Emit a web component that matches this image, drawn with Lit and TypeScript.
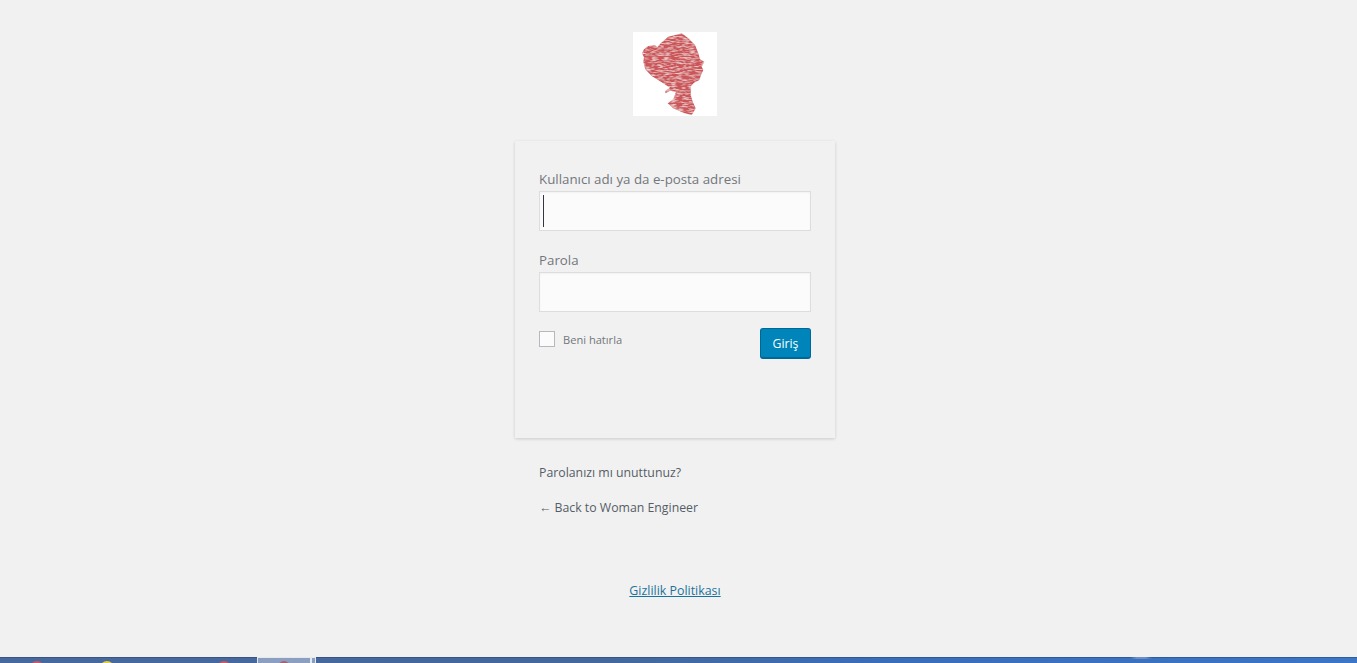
import { LitElement, css, html } from "lit";
import { customElement } from "lit/decorators.js";

const SILHOUETTE =
  "M48.7 1.3 L55.3 6.3 L62 13 L65.3 21.3 L67 27.3 L71.3 29.7 L68.7 34.7 L70.3 38 L68 43 L66.3 48 L61 50.7 L58 54 L57.7 63 L59.7 69.7 L62.7 76.3 L58.7 83 L50.3 80.7 L40.3 76.3 L34.7 71.3 L40.3 67.3 L43 59.7 L37 58.7 L32.7 61.3 L32 59.3 L37 55.7 L30.3 51.3 L18.7 44 L12.3 37.3 L10.3 29.7 L11 25.3 L9 21.3 L11 17.3 L15.3 14 L22 13.3 L24.3 15.3 L27.7 11.3 L35.3 4.7 L45.3 2.3 Z";

@customElement("site-logo")
export class SiteLogo extends LitElement {
  render() {
    return html`
      <svg viewBox="0 0 84 84" width="84" height="84" aria-label="Woman Engineer">
        <defs>
          <!-- stretched noise gives the "lines of text" look inside the head -->
          <filter id="paper" x="0" y="0" width="100%" height="100%">
            <feTurbulence type="fractalNoise" baseFrequency="0.16 0.7" numOctaves="2" seed="4" result="noise"></feTurbulence>
            <feColorMatrix
              in="noise"
              type="matrix"
              values="0 0 0 0 0.95  0 0 0 0 0.78  0 0 0 0 0.78  2 0 0 0 -0.85"
              result="light"
            ></feColorMatrix>
            <feComposite in="light" in2="SourceAlpha" operator="in" result="marks"></feComposite>
            <feMerge result="merged">
              <feMergeNode in="SourceGraphic"></feMergeNode>
              <feMergeNode in="marks"></feMergeNode>
            </feMerge>
            <feGaussianBlur in="merged" stdDeviation="0.5"></feGaussianBlur>
          </filter>
        </defs>
        <rect width="84" height="84" fill="#fff"></rect>
        <path d=${SILHOUETTE} fill="#cb5459" filter="url(#paper)"></path>
      </svg>
    `;
  }

  static styles = css`
    :host {
      display: block;
      width: 84px;
      height: 84px;
    }
    svg {
      display: block;
    }
  `;
}

@customElement("app-root")
export class AppRoot extends LitElement {
  render() {
    return html`
      <main class="login">
        <site-logo></site-logo>
        <form class="card" @submit=${(e: Event) => e.preventDefault()}>
          <label class="field-label" for="user">Kullanıcı adı ya da e-posta adresi</label>
          <div class="field">
            <input id="user" type="text" />
            <span class="caret"></span>
          </div>
          <label class="field-label second" for="pass">Parola</label>
          <div class="field"><input id="pass" type="password" /></div>
          <div class="actions">
            <label class="remember"><input class="check" type="checkbox" />Beni hatırla</label>
            <button class="submit">Giriş</button>
          </div>
        </form>
        <nav class="links">
          <a>Parolanızı mı unuttunuz?</a>
          <a>← Back to Woman Engineer</a>
        </nav>
        <a class="privacy">Gizlilik Politikası</a>
      </main>
      <footer class="taskbar">
        <span class="peek red first"></span>
        <span class="peek yellow"></span>
        <span class="peek red third"></span>
        <span class="active"><span class="active-icon"></span></span>
        <span class="active-edge"></span>
        <span class="smudge"></span>
      </footer>
    `;
  }

  static styles = css`
    :host {
      display: flex;
      flex-direction: column;
      height: 663px;
      overflow: hidden;
      background: #f1f1f1;
      font-family: "Open Sans", "Noto Sans", sans-serif;
      color: #72777c;
    }
    .login {
      flex: 1;
      display: flex;
      flex-direction: column;
      align-items: center;
      padding: 32px 7px 0 0;
    }
    .card {
      box-sizing: border-box;
      width: 320px;
      height: 297px;
      margin-top: 25px;
      padding: 28px 24px 0;
      background: #f1f1f1;
      box-shadow: 0 1px 3px rgba(0, 0, 0, 0.16);
    }
    .field-label {
      display: block;
      margin-bottom: 2px;
      font-size: 13.3px;
      line-height: 20px;
      white-space: nowrap;
    }
    .second {
      margin-top: 19px;
    }
    .field {
      position: relative;
      height: 40px;
    }
    .field input {
      display: block;
      box-sizing: border-box;
      width: 100%;
      height: 100%;
      margin: 0;
      background: #fbfbfb;
      border: 1px solid #ddd;
      border-radius: 0;
      outline: none;
      box-shadow: inset 0 1px 2px rgba(0, 0, 0, 0.04);
    }
    .caret {
      position: absolute;
      top: 4px;
      left: 4px;
      width: 1px;
      height: 32px;
      background: #32373c;
    }
    .actions {
      display: flex;
      justify-content: space-between;
      align-items: flex-start;
      margin-top: 16px;
    }
    .remember {
      display: flex;
      align-items: center;
      gap: 8px;
      margin-top: 3px;
      font-size: 11.1px;
      line-height: 18px;
    }
    .check {
      appearance: none;
      align-self: flex-start;
      box-sizing: border-box;
      width: 16px;
      height: 16px;
      margin: 0;
      background: #fbfbfb;
      border: 1px solid #b4b9be;
    }
    .submit {
      box-sizing: border-box;
      width: 51px;
      height: 31px;
      padding: 0;
      font: inherit;
      font-size: 12.2px;
      color: #fff;
      background: #0085ba;
      border: 1px solid #006799;
      border-bottom-width: 2px;
      border-radius: 3px;
    }
    .links {
      box-sizing: border-box;
      display: flex;
      flex-direction: column;
      gap: 15px;
      width: 320px;
      margin-top: 25px;
      padding: 0 24px;
      font-size: 12.3px;
      line-height: 20px;
      color: #555d66;
    }
    .privacy {
      margin-top: 63px;
      font-size: 12.4px;
      line-height: 20px;
      color: #1a719c;
      text-decoration: underline;
    }
    .taskbar {
      flex: none;
      display: flex;
      height: 6px;
      overflow: hidden;
      background: linear-gradient(90deg, #47689c 0%, #44689c 45%, #3a6db8 65%, #3b75c6 100%);
      box-shadow: inset 0 1px rgba(30, 50, 90, 0.35);
    }
    .peek {
      flex: none;
      width: 14px;
      height: 14px;
      margin-top: 4px;
      border-radius: 50%;
    }
    .red {
      background: #c75a60;
    }
    .yellow {
      margin-left: 56px;
      background: #e8cf3c;
    }
    .first {
      margin-left: 30px;
    }
    .third {
      margin-left: 103px;
    }
    .active {
      flex: none;
      display: flex;
      justify-content: center;
      box-sizing: border-box;
      width: 54px;
      height: 10px;
      margin-left: 26px;
      background: #8c9fc0;
      border: 1px solid #e4e8ef;
    }
    .active-icon {
      width: 12px;
      height: 12px;
      margin-top: 3px;
      border-radius: 50%;
      background: #a5636f;
    }
    .active-edge {
      flex: none;
      box-sizing: border-box;
      width: 5px;
      height: 10px;
      background: #8c9fc0;
      border: 1px solid #e4e8ef;
    }
    .smudge {
      flex: none;
      width: 22px;
      height: 2px;
      margin-left: auto;
      margin-right: 205px;
      background: linear-gradient(90deg, transparent, #6f8fc4 30%, #6f8fc4 70%, transparent);
    }
  `;
}
